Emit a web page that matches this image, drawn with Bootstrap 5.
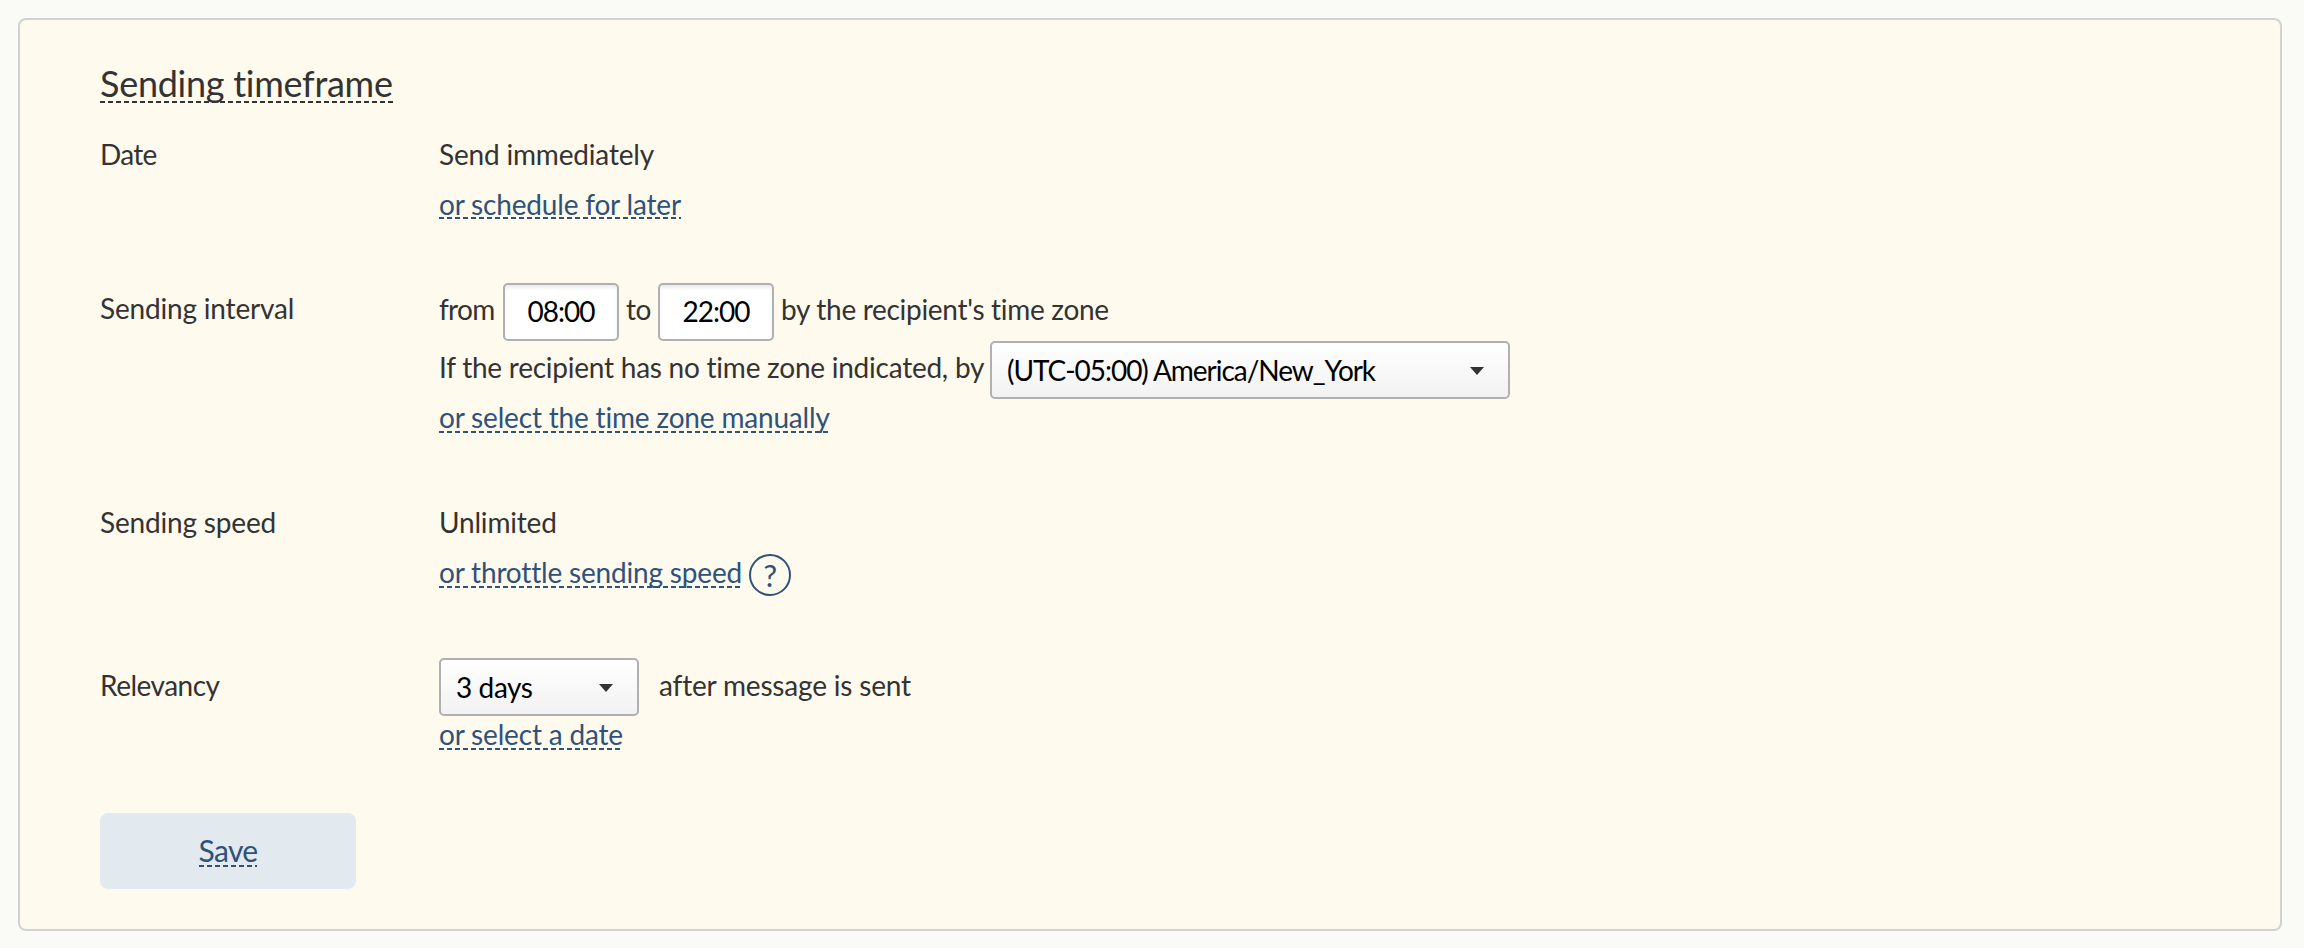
<!DOCTYPE html>
<html lang="en">
<head>
<meta charset="utf-8">
<meta name="viewport" content="width=device-width, initial-scale=1">
<title>Sending timeframe</title>
<link href="https://cdn.jsdelivr.net/npm/bootstrap@5.3.0/dist/css/bootstrap.min.css" rel="stylesheet">
<style>
  body{background:#fafbf7;color:#333;font-family:Lato,"Open Sans",sans-serif;font-size:28px;letter-spacing:-.18px;line-height:50px;padding:18px 22px 0 18px}
  .panel{height:913px;background:#fffaee;border:2px solid #d2d2d2;border-radius:8px;padding:38px 80px 0}
  .title{font-size:36px;line-height:50px;letter-spacing:-.27px;margin:0 0 21px;font-weight:400}
  .setting{display:grid;grid-template-columns:339px 1fr;margin-bottom:62px;white-space:nowrap}
  .setting.date{margin-bottom:54px}
  .setting.date .dashed{background-position:0 calc(100% - 2px)}
  .setting.speed{margin-bottom:61px}
  .setting.relevancy{margin-bottom:0}
  .tight{letter-spacing:-.75px}
  .relevancy .tight{padding-top:2px;letter-spacing:-.5px}
  .dashed{color:inherit;text-decoration:none;background:repeating-linear-gradient(90deg,currentColor 0 5px,transparent 5px 8px) 0 calc(100% - 1px)/100% 2px no-repeat}
  .title .dashed{background-position:0 calc(100% - 2px)}
  .act{color:#2f527a}
  .short{line-height:36px}
  .control-line{height:58px}
  .control-line>span{line-height:50px;padding-bottom:7px}
  .relevancy .control-line>span{padding-bottom:5px}
  .from{width:64px;letter-spacing:-.7px}
  .to{width:39px;padding-left:7px;letter-spacing:-.5px}
  .by{padding-left:7px;letter-spacing:-.3px}
  .no-zone{width:551px;letter-spacing:-.24px}
  .form-control,.form-select{height:58px;color:#000;font-size:28px;line-height:34px;border:2px solid #b0b0b3;border-radius:5px}
  .time{width:116px;padding:9px 0 11px;text-align:center;letter-spacing:-.95px;background:#fff;box-shadow:inset 0 3px 3px #eee}
  .pick{padding:10px 0 10px 15px;background:url("data:image/svg+xml,%3Csvg xmlns='http://www.w3.org/2000/svg' viewBox='0 0 14 8'%3E%3Cpath d='M0 0h14L7 8z' fill='%23333'/%3E%3C/svg%3E") right 24px top 24px/14px 8px no-repeat,linear-gradient(#fff,#f2f2f3)}
  .zone{width:520px;letter-spacing:-1.04px}
  .days{width:200px;letter-spacing:-.4px}
  .help-mark{width:42px;height:42px;border:2px solid #2f527a;border-radius:50%;margin:6px 0 0 7px;font-size:31px;line-height:38px}
  .save{width:256px;height:76px;margin-top:61px;padding:0;border:0;border-radius:8px;background:#e2e9ef;color:#2f527a;font-size:30px;line-height:74px;vertical-align:top;letter-spacing:-.65px}
  .save .dashed{position:relative;top:-1px}
  .save:hover{background:#d8e1ea;color:#2f527a}
</style>
</head>
<body>
<main class="panel">
  <h1 class="title"><a href="#" class="dashed">Sending timeframe</a></h1>

  <section class="setting date">
    <div class="tight">Date</div>
    <div>
      <div>Send immediately</div>
      <div><a href="#" class="dashed act">or schedule for later</a></div>
    </div>
  </section>

  <section class="setting">
    <div>Sending interval</div>
    <div>
      <div class="control-line d-flex align-items-center">
        <span class="from">from</span>
        <input class="form-control time" value="08:00" aria-label="From">
        <span class="to">to</span>
        <input class="form-control time" value="22:00" aria-label="To">
        <span class="by">by the recipient's time zone</span>
      </div>
      <div class="control-line d-flex align-items-center">
        <span class="no-zone">If the recipient has no time zone indicated, by</span>
        <select class="form-select pick zone" aria-label="Time zone"><option>(UTC-05:00) America/New_York</option></select>
      </div>
      <div class="short"><a href="#" class="dashed act">or select the time zone manually</a></div>
    </div>
  </section>

  <section class="setting speed">
    <div>Sending speed</div>
    <div>
      <div>Unlimited</div>
      <div class="d-flex align-items-center act">
        <div><a href="#" class="dashed">or throttle sending speed</a></div>
        <span class="help-mark text-center">?</span>
      </div>
    </div>
  </section>

  <section class="setting relevancy">
    <div class="tight">Relevancy</div>
    <div>
      <div class="control-line d-flex align-items-center">
        <select class="form-select pick days" aria-label="Relevancy"><option>3 days</option></select>
        <span class="ms-3 ps-1">after message is sent</span>
      </div>
      <div class="short"><a href="#" class="dashed act">or select a date</a></div>
    </div>
  </section>

  <button type="button" class="btn save"><span class="dashed">Save</span></button>
</main>
<script src="https://cdn.jsdelivr.net/npm/bootstrap@5.3.0/dist/js/bootstrap.bundle.min.js"></script>
</body>
</html>
